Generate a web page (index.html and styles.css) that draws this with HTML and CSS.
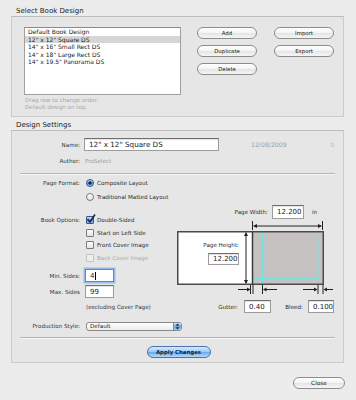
FILE: index.html
```html
<!DOCTYPE html>
<html lang="en">
<head>
  <meta charset="UTF-8">
  <title>Book Designs</title>
  <link rel="stylesheet" href="styles.css">
</head>
<body>
  <div class="window">
    <div class="section-title">Select Book Design</div>

    <!-- design list -->
    <div class="group design-group">
      <div class="list-col">
        <div class="list">
          <div class="list-row">Default Book Design</div>
          <div class="list-row selected">12" x 12" Square DS</div>
          <div class="list-row">14" x 16" Small Rect DS</div>
          <div class="list-row">14" x 18" Large Rect DS</div>
          <div class="list-row">14" x 19.5" Panorama DS</div>
        </div>
        <div class="hint">Drag row to change order.<br>Default design on top.</div>
      </div>
      <div class="btn-grid">
        <button class="btn">Add</button>
        <button class="btn">Import</button>
        <button class="btn">Duplicate</button>
        <button class="btn">Export</button>
        <button class="btn">Delete</button>
      </div>
    </div>

    <div class="section-title second">Design Settings</div>

    <!-- settings -->
    <div class="group settings-group">
      <div class="frow name-row">
        <span class="lbl">Name:</span>
        <div class="field name-field">12" x 12" Square DS</div>
        <span class="date">12/08/2009</span>
        <span class="count">0</span>
      </div>
      <div class="frow author-row">
        <span class="lbl">Author:</span>
        <span class="muted">ProSelect</span>
      </div>

      <div class="sep"></div>

      <div class="main">
        <div class="left-col">
          <div class="frow opt-row first">
            <span class="lbl">Page Format:</span>
            <span class="rb on"></span><span>Composite Layout</span>
          </div>
          <div class="frow opt-row">
            <span class="lbl"></span>
            <span class="rb"></span><span>Traditional Matted Layout</span>
          </div>

          <div class="frow cb-row book-first">
            <span class="lbl">Book Options:</span>
            <span class="cb on">
              <svg width="10" height="10" viewBox="0 0 10 10"><path d="M1.5 5.2 L4 8 L9 0.5" fill="none" stroke="#1c2740" stroke-width="1.6"/></svg>
            </span><span>Double-Sided</span>
          </div>
          <div class="frow cb-row">
            <span class="lbl"></span>
            <span class="cb"></span><span>Start on Left Side</span>
          </div>
          <div class="frow cb-row">
            <span class="lbl"></span>
            <span class="cb"></span><span>Front Cover Image</span>
          </div>
          <div class="frow cb-row disabled">
            <span class="lbl"></span>
            <span class="cb"></span><span>Back Cover Image</span>
          </div>

          <div class="frow sides-row min-row">
            <span class="lbl">Min. Sides:</span>
            <div class="field sides-field focus">4<span class="caret"></span></div>
          </div>
          <div class="frow sides-row max-row">
            <span class="lbl">Max. Sides</span>
            <div class="field sides-field">99</div>
          </div>
          <div class="note">(excluding Cover Page)</div>
        </div>

        <div class="right-col">
          <div class="pw-row">
            <span class="pw-lbl">Page Width:</span>
            <div class="field pw-field">12.200</div>
            <span class="unit">in</span>
          </div>

          <div class="diagram">
            <svg width="158" height="80" viewBox="0 0 158 80">
              <rect x="0.75" y="12.75" width="145.5" height="52.5" fill="#fff"/>
              <rect x="75" y="12.75" width="71.25" height="52.5" fill="#c6c2c2"/>
              <rect x="75.5" y="18.5" width="65.5" height="41" fill="none" stroke="#72e2e0" stroke-width="1"/>
              <line x1="85.5" y1="13" x2="85.5" y2="65" stroke="#72e2e0" stroke-width="1"/>
              <rect x="0.75" y="12.75" width="145.5" height="52.5" fill="none" stroke="#4a4a4a" stroke-width="1.5"/>
              <line x1="75.5" y1="12" x2="75.5" y2="66" stroke="#3a3a3a" stroke-width="1.5"/>
              <!-- page height arrow -->
              <line x1="69" y1="14" x2="69" y2="64" stroke="#222" stroke-width="1"/>
              <polygon points="69,13 67,17 71,17" fill="#222"/>
              <polygon points="69,65 67,61 71,61" fill="#222"/>
              <!-- page width arrow -->
              <line x1="75.5" y1="2" x2="75.5" y2="11" stroke="#222" stroke-width="1"/>
              <line x1="145.5" y1="2" x2="145.5" y2="11" stroke="#222" stroke-width="1"/>
              <line x1="77" y1="7" x2="144" y2="7" stroke="#222" stroke-width="1"/>
              <polygon points="76,7 80,5 80,9" fill="#222"/>
              <polygon points="145,7 141,5 141,9" fill="#222"/>
              <!-- gutter arrows -->
              <line x1="61" y1="70.5" x2="71" y2="70.5" stroke="#222" stroke-width="1"/>
              <polygon points="73.5,70.5 70,68.5 70,72.5" fill="#222"/>
              <line x1="73.5" y1="66" x2="73.5" y2="75" stroke="#222" stroke-width="1"/>
              <line x1="76" y1="66" x2="76" y2="75" stroke="#222" stroke-width="1"/>
              <line x1="85.5" y1="66" x2="85.5" y2="75" stroke="#222" stroke-width="1"/>
              <polygon points="86,70.5 89.5,68.5 89.5,72.5" fill="#222"/>
              <line x1="88" y1="70.5" x2="100" y2="70.5" stroke="#222" stroke-width="1"/>
              <!-- bleed arrows -->
              <line x1="126" y1="70.5" x2="138" y2="70.5" stroke="#222" stroke-width="1"/>
              <polygon points="140.5,70.5 137,68.5 137,72.5" fill="#222"/>
              <line x1="141" y1="66" x2="141" y2="75" stroke="#222" stroke-width="1"/>
              <line x1="146" y1="66" x2="146" y2="75" stroke="#222" stroke-width="1"/>
              <polygon points="146.5,70.5 150,68.5 150,72.5" fill="#222"/>
              <line x1="149" y1="70.5" x2="156" y2="70.5" stroke="#222" stroke-width="1"/>
            </svg>
            <div class="ph-lbl">Page Height:</div>
            <div class="field ph-field">12.200</div>
          </div>

          <div class="gb-row">
            <span class="gutter-lbl">Gutter:</span>
            <div class="field gutter-field">0.40</div>
            <span class="bleed-lbl">Bleed:</span>
            <div class="field bleed-field">0.100</div>
          </div>
        </div>
      </div>

      <div class="frow prod-row">
        <span class="lbl">Production Style:</span>
        <div class="popup">
          <span class="popup-text">Default</span>
          <span class="popup-arrows">
            <svg width="5" height="7" viewBox="0 0 5 7"><polygon points="2.5,0.5 0.5,2.8 4.5,2.8" fill="#1d2b4a"/><polygon points="2.5,6.5 0.5,4.2 4.5,4.2" fill="#1d2b4a"/></svg>
          </span>
        </div>
      </div>

      <div class="sep sep-bottom"></div>

      <div class="apply-row">
        <button class="btn btn-default">Apply Changes</button>
      </div>
    </div>

    <div class="footer">
      <button class="btn close-btn">Close</button>
    </div>
  </div>
</body>
</html>
```

FILE: styles.css
```css
* {
  box-sizing: border-box;
}

body {
  margin: 0;
  background: #ececec;
  font-family: "DejaVu Sans", Verdana, sans-serif;
  font-size: 5.6px;
  color: #2a2a2a;
}

.window {
  width: 356px;
  height: 400px;
  padding-top: 6px;
}

.section-title {
  font-size: 7px;
  line-height: 10px;
  margin-left: 16px;
  color: #1c1c1c;
}

.section-title.second {
  margin-top: 3px;
}

.group {
  margin: 0 12px 0 11px;
  background: #e6e6e6;
  border: 1px solid #cbcbcb;
  border-top-color: #bcbcbc;
}

/* top group */
.design-group {
  height: 101px;
  display: flex;
  padding: 10px 0 0 12px;
}

.list {
  width: 157px;
  height: 68px;
  background: #fff;
  border: 1px solid #a0a0a0;
  border-top-color: #8a8a8a;
  font-size: 6px;
  color: #1a1a1a;
}

.list-row {
  height: 7.6px;
  line-height: 7.6px;
  padding-left: 3px;
}

.list-row.selected {
  background: #d6d6d6;
}

.hint {
  margin-top: 1.5px;
  padding-left: 1px;
  line-height: 7.5px;
  color: #a6a6a6;
}

.btn-grid {
  display: grid;
  grid-template-columns: 60px 60px;
  grid-auto-rows: 12px;
  column-gap: 17px;
  row-gap: 6px;
  margin-left: 16px;
  align-content: start;
}

.btn {
  height: 12px;
  padding: 0;
  border: 1px solid #8c8c8c;
  border-radius: 6px;
  background: linear-gradient(#ffffff, #f3f3f3 50%, #e4e4e4 51%, #f6f6f6);
  font-family: "DejaVu Sans", Verdana, sans-serif;
  font-size: 5.4px;
  color: #222;
}

/* settings group */
.settings-group {
  height: 233px;
}

.frow {
  display: flex;
  align-items: center;
}

.lbl {
  flex: none;
  width: 68px;
  margin-right: 5px;
  text-align: right;
  color: #333;
}

.field {
  background: #fff;
  border: 1px solid #9c9c9c;
  border-top-color: #6e6e6e;
  box-shadow: inset 0 1px 1px rgba(0, 0, 0, 0.12);
  font-size: 7px;
  color: #1a1a1a;
  padding-left: 4px;
  display: flex;
  align-items: center;
}

.name-row {
  height: 13px;
  margin-top: 7px;
}

.name-field {
  width: 135px;
  height: 13px;
  margin-left: -1px;
  font-size: 7.2px;
}

.date {
  margin-left: 32px;
  font-size: 6.2px;
  color: #9c9c9c;
}

.count {
  margin-left: auto;
  margin-right: 9px;
  color: #b4b4b4;
}

.author-row {
  height: 12px;
  margin-top: 4px;
}

.muted {
  color: #9a9a9a;
}

.sep {
  height: 2px;
  margin: 6px 8px 0;
  border-top: 1px solid #b4b4b4;
  border-bottom: 1px solid #f7f7f7;
}

.main {
  display: flex;
}

.left-col {
  width: 165px;
}

.opt-row {
  height: 12px;
  margin-top: 2px;
}

.cb-row {
  height: 12.5px;
}

.book-first {
  margin-top: 11px;
}

.rb,
.cb {
  flex: none;
  position: relative;
  width: 8px;
  height: 8px;
  margin: 0 3px 0 1px;
  border: 1px solid #7a7a7a;
  background: linear-gradient(#ffffff, #e4e4e4);
}

.rb {
  border-radius: 50%;
}

.cb {
  border-radius: 1px;
}

.rb.on {
  border-color: #35568a;
  background: radial-gradient(circle, #15213a 0 1.4px, transparent 1.8px), linear-gradient(#c6def8, #5f9de0 55%, #8cc0f4);
}

.cb.on {
  border-color: #35568a;
  background: linear-gradient(#c6def8, #5f9de0 55%, #8cc0f4);
}

.cb svg {
  position: absolute;
  left: -1px;
  top: -3px;
}

.cb-row.disabled {
  color: #aaaaaa;
}

.cb-row.disabled .cb {
  border-color: #c4c4c4;
  background: #eeeeee;
}

.sides-row {
  height: 13px;
}

.min-row {
  margin-top: 5px;
}

.max-row {
  margin-top: 3px;
}

.sides-field {
  width: 29px;
  height: 13px;
}

.sides-field.focus {
  border-color: #5b88c6;
  box-shadow: 0 0 0 1.5px #93bcea;
}

.caret {
  width: 0;
  height: 8px;
  margin-left: 0.5px;
  border-left: 1px solid #000;
}

.note {
  height: 10px;
  margin-top: 4px;
  padding-left: 74px;
  line-height: 10px;
  color: #333;
}

/* page diagram */
.right-col {
  width: 158px;
}

.pw-row {
  display: flex;
  align-items: center;
  height: 14px;
  margin-top: 30px;
}

.pw-lbl {
  width: 91px;
  margin-right: 4px;
  text-align: right;
}

.pw-field {
  width: 32px;
  height: 14px;
}

.unit {
  margin-left: 8px;
}

.diagram {
  position: relative;
  height: 80px;
}

.diagram svg {
  display: block;
}

.ph-lbl {
  position: absolute;
  left: 14px;
  top: 23px;
  width: 48px;
  text-align: right;
}

.ph-field {
  position: absolute;
  left: 31px;
  top: 34px;
  width: 31px;
  height: 12px;
}

.gb-row {
  display: flex;
  align-items: center;
  height: 13px;
  margin-top: 1px;
}

.gutter-lbl {
  width: 61px;
  margin-right: 6px;
  text-align: right;
}

.gutter-field {
  width: 27px;
  height: 13px;
}

.bleed-lbl {
  width: 32px;
  margin-right: 5px;
  text-align: right;
}

.bleed-field {
  width: 26px;
  height: 13px;
}

/* bottom of settings */
.prod-row {
  height: 12px;
  margin-top: 7px;
}

.popup {
  display: flex;
  width: 96px;
  height: 9px;
  margin-left: 1px;
  border: 1px solid #8a8a8a;
  border-radius: 3px;
  overflow: hidden;
  background: linear-gradient(#ffffff, #ebebeb);
}

.popup-text {
  flex: 1;
  padding-left: 3px;
  line-height: 7px;
  color: #1a1a1a;
}

.popup-arrows {
  width: 8px;
  display: flex;
  align-items: center;
  justify-content: center;
  border-left: 1px solid #6d8fc0;
  background: linear-gradient(#c9e0f8, #6ea8e6 55%, #9bcaf6);
}

.sep-bottom {
  margin-top: 5px;
}

.apply-row {
  display: flex;
  justify-content: center;
  margin-top: 7px;
  padding-left: 2px;
}

.btn-default {
  width: 64px;
  border-color: #4b73a8;
  background: linear-gradient(#d8eafc, #9cc8f4 48%, #6aa9ec 52%, #b4dafc);
  font-weight: bold;
  color: #102448;
}

.footer {
  display: flex;
  justify-content: flex-end;
  margin-top: 14px;
  padding-right: 11px;
}

.close-btn {
  width: 52px;
  font-size: 5.8px;
}
```
